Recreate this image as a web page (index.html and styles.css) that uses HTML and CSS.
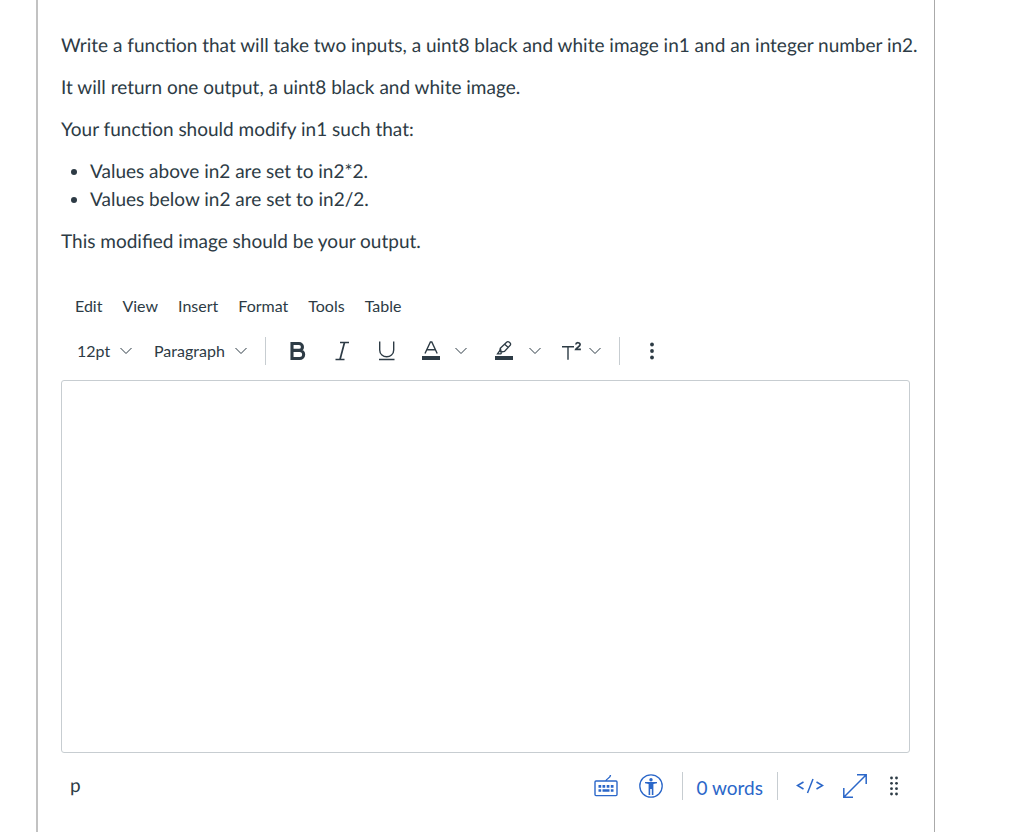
FILE: index.html
```html
<!DOCTYPE html>
<html lang="en">
<head>
    <meta charset="UTF-8">
    <title>Question</title>
    <link rel="stylesheet" href="styles.css">
</head>
<body>
    <div class="question">
        <div class="question-text">
            <p>Write a function that will take two inputs, a uint8 black and white image in1 and an integer number in2.</p>
            <p>It will return one output, a uint8 black and white image.</p>
            <p>Your function should modify in1 such that:</p>
            <ul>
                <li>Values above in2 are set to in2*2.</li>
                <li>Values below in2 are set to in2/2.</li>
            </ul>
            <p>This modified image should be your output.</p>
        </div>

        <div class="editor">
            <div class="menubar">
                <button type="button">Edit</button>
                <button type="button">View</button>
                <button type="button">Insert</button>
                <button type="button">Format</button>
                <button type="button">Tools</button>
                <button type="button">Table</button>
            </div>

            <div class="toolbar">
                <select class="font-size" aria-label="Font size">
                    <option>12pt</option>
                </select>
                <select class="block-type" aria-label="Block type">
                    <option>Paragraph</option>
                </select>
                <span class="divider"></span>
                <div class="tools">
                    <button type="button" class="tool" aria-label="Bold">
                        <svg width="24" height="24" viewBox="0 0 24 24" fill="none" stroke="currentColor" stroke-width="3.100"><path d="M6 4.500h7a3.400 3.400 0 0 1 0 6.900H6m0 0h7.600a4 4 0 0 1 0 8.100H6M6 3v18"/></svg>
                    </button>
                    <button type="button" class="tool" aria-label="Italic">
                        <svg width="24" height="24" viewBox="0 0 24 24" fill="none" stroke="currentColor" stroke-width="1.300"><path d="M10 3.500h9M5.500 20.500h9" /><path d="M14.500 3.500l-4.500 17" stroke-width="1.700"/></svg>
                    </button>
                    <button type="button" class="tool" aria-label="Underline">
                        <svg width="24" height="24" viewBox="0 0 24 24" fill="none" stroke="currentColor" stroke-width="1.400"><path d="M5.700 2.500v8.500c0 9 14 9 14 0V2.500M5 20.500h15.500"/></svg>
                    </button>
                    <button type="button" class="tool" aria-label="Text color">
                        <svg width="24" height="24" viewBox="0 0 24 24" fill="none" stroke="currentColor" stroke-width="1.400"><path d="M7 14.500L12.400 3h1.400l5.400 11.500M9 10.700h8.300"/><path d="M4 17h18v4H4z" fill="currentColor" stroke="none"/></svg>
                    </button>
                    <button type="button" class="arrow" aria-label="Text color menu">
                        <svg width="12" height="8" viewBox="0 0 12 8" fill="none" stroke="currentColor"><path d="M.5 1L6 6.500 11.500 1"/></svg>
                    </button>
                    <button type="button" class="tool" aria-label="Highlight color">
                        <svg width="24" height="24" viewBox="0 0 24 24" fill="none" stroke="currentColor" stroke-width="1.300"><path d="M8.300 9.200l6.300-6c1.700-1.600 5.200 1.300 3.600 3l-5.700 6.300-3.300.500zM8.300 9.200l-.6 2.800 1.500 1.300M7.600 11.800L5.500 14.800h3.300l1-1.500M12.700 5.200l3.300 3"/><path d="M3 17h18v4H3z" fill="currentColor" stroke="none"/></svg>
                    </button>
                    <button type="button" class="arrow" aria-label="Highlight color menu">
                        <svg width="12" height="8" viewBox="0 0 12 8" fill="none" stroke="currentColor"><path d="M.5 1L6 6.500 11.500 1"/></svg>
                    </button>
                    <button type="button" class="script" aria-label="Superscript and subscript">
                        <svg width="20" height="24" viewBox="0 0 20 24" fill="none" stroke="currentColor" stroke-width="1.400"><path d="M0 7.700h12M6 7.700v13"/><path d="M13.800 5.500c.3-2.500 4.600-2.300 4.300.2-.2 1.800-3 2.600-4.200 4.600h5" stroke-width="1.700"/></svg>
                        <svg width="12" height="8" viewBox="0 0 12 8" fill="none" stroke="currentColor"><path d="M.5 1L6 6.500 11.500 1"/></svg>
                    </button>
                </div>
                <span class="divider"></span>
                <button type="button" class="more" aria-label="More">
                    <svg width="4" height="18" viewBox="0 0 4 18" fill="currentColor"><circle cx="2" cy="2.500" r="1.900"/><circle cx="2" cy="9" r="1.900"/><circle cx="2" cy="15.500" r="1.900"/></svg>
                </button>
            </div>

            <textarea class="answer" aria-label="Answer"></textarea>

            <div class="statusbar">
                <span class="path">p</span>
                <button type="button" class="keyboard" aria-label="Keyboard shortcuts">
                    <svg width="24" height="24" viewBox="0 0 24 24" fill="none" stroke="currentColor" stroke-width="1.400"><rect x="1" y="7" width="22" height="14.600" rx="1"/><path d="M12 7c0-3 4.500-2 4.500-6"/><path d="M4.500 12.300h2.700M8.500 12.300h2.700M12.700 12.300h2.700M16.800 12.300h2.700M4.500 16.500h2.700M8.500 16.500h7M16.800 16.500h2.700" stroke-width="2.700"/></svg>
                </button>
                <button type="button" class="a11y" aria-label="Accessibility checker">
                    <svg width="24" height="24" viewBox="0 0 24 24" fill="currentColor"><circle cx="12" cy="12" r="11.200" fill="none" stroke="currentColor" stroke-width="1.300"/><circle cx="12" cy="5.700" r="1.700"/><path d="M6 8h12v1.300l-3.600.7v11h-1.600v-6h-1.600v6H9.600V10L6 9.300z"/></svg>
                </button>
                <span class="divider"></span>
                <button type="button" class="words">0 words</button>
                <span class="divider"></span>
                <button type="button" class="html" aria-label="Switch to HTML editor">
                    <svg width="28" height="16" viewBox="0 0 28 16" fill="none" stroke="currentColor" stroke-width="1.500"><path d="M7.500 4L1.500 7.500l6 3.500M20.500 4l6 3.500-6 3.500M17 1l-5.500 14"/></svg>
                </button>
                <button type="button" class="fullscreen" aria-label="Fullscreen">
                    <svg width="24" height="24" viewBox="0 0 24 24" fill="none" stroke="currentColor" stroke-width="1.500"><path d="M1 23L23 1M14 .800h9.200V10M.800 14v9.200H10"/></svg>
                </button>
                <button type="button" class="resize" aria-label="Resize editor">
                    <svg width="8" height="20" viewBox="0 0 8 20" fill="currentColor"><circle cx="1.500" cy="2" r="1.400"/><circle cx="6.500" cy="2" r="1.400"/><circle cx="1.500" cy="7.300" r="1.400"/><circle cx="6.500" cy="7.300" r="1.400"/><circle cx="1.500" cy="12.700" r="1.400"/><circle cx="6.500" cy="12.700" r="1.400"/><circle cx="1.500" cy="18" r="1.400"/><circle cx="6.500" cy="18" r="1.400"/></svg>
                </button>
            </div>
        </div>
    </div>
</body>
</html>
```
FILE: styles.css
```css
* {
    box-sizing: border-box;
}

body {
    margin: 0 89px 0 36px;
    background-color: #fff;
    color: #2d3b45;
    font-family: Lato, "Liberation Sans", sans-serif;
    font-size: 19px;
    line-height: 28px;
    text-rendering: geometricPrecision;
}

.question {
    min-height: 100vh;
    padding: 32px 14px 24px 23px;
    border-left: 2px solid #c2c2c2;
    border-right: 1px solid #aaa;
}

.question-text p {
    margin: 0 0 14px;
}

.question-text ul {
    margin: 0 0 14px;
    padding-left: 29px;
}

button,
select {
    margin: 0;
    padding: 0;
    border: none;
    background: none;
    color: inherit;
    font: inherit;
    cursor: pointer;
}

svg {
    display: block;
}

.editor {
    margin: 36px 10px 0 0;
}

.menubar {
    display: flex;
    gap: 20px;
    padding-left: 14px;
    font-size: 16px;
}

.toolbar {
    display: flex;
    align-items: center;
    height: 60px;
    padding: 1px 0 0 16px;
    font-size: 16px;
}

.toolbar select {
    appearance: none;
    background: url("data:image/svg+xml,%3Csvg xmlns='http://www.w3.org/2000/svg' width='12' height='8' fill='none' stroke='%232d3b45'%3E%3Cpath d='M.5 1L6 6.5 11.5 1'/%3E%3C/svg%3E") no-repeat right center;
}

.font-size {
    width: 55px;
}

.toolbar .block-type {
    width: 93px;
    margin: 0 18px 0 22px;
}

.divider {
    width: 1px;
    height: 28px;
    background-color: #c7cdd1;
}

.tools {
    display: flex;
    align-items: center;
    padding: 0 18px 0 10px;
}

.tool {
    display: flex;
    justify-content: center;
    width: 44px;
}

.arrow {
    display: flex;
    justify-content: center;
    width: 18px;
    margin-right: 12px;
}

.script {
    display: flex;
    align-items: center;
    gap: 7px;
    margin-left: 6px;
}

.more {
    margin-left: 30px;
}

.answer {
    display: block;
    width: 100%;
    height: 373px;
    padding: 12px;
    border: 1px solid #c7cdd1;
    border-radius: 3px;
    outline: none;
    resize: none;
    color: inherit;
    font: inherit;
}

.statusbar {
    display: flex;
    align-items: center;
    padding: 17px 12px 0 9px;
    color: #2b67c9;
}

.path {
    margin-right: auto;
    color: #2d3b45;
}

.a11y {
    margin: 0 19px 0 21px;
}

.words {
    margin: 0 14px;
    padding-top: 4px;
}

.html {
    margin: 0 19px 0 18px;
}

.resize {
    margin-left: 23px;
    color: #2d3b45;
}
```
